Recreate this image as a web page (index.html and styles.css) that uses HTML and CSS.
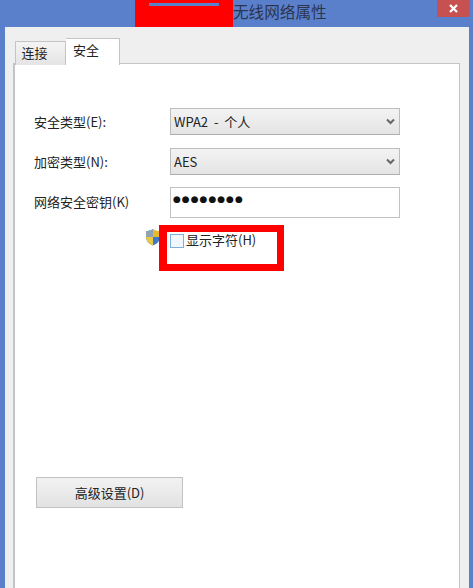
FILE: index.html
```html
<!DOCTYPE html>
<html lang="zh-CN">
<head>
    <meta charset="UTF-8">
    <title>无线网络属性</title>
    <link rel="stylesheet" href="styles.css">
</head>
<body>

    <div class="titlebar">
        <div class="redact"><div class="redact-strip"></div></div>
        <div class="title">无线网络属性</div>
        <div class="close-btn">
            <svg width="11" height="11" viewBox="0 0 11 11">
                <path d="M2 2 L9 9 M9 2 L2 9" stroke="#fff" stroke-width="2.2"/>
            </svg>
        </div>
    </div>

    <div class="dialog">
        <div class="tabs">
            <div class="tab">连接</div>
            <div class="tab active">安全</div>
        </div>

        <div class="pane">
            <div class="form">
                <label class="form-label">安全类型(E):</label>
                <div class="combo">
                    <span>WPA2 - 个人</span>
                    <svg class="chevron" width="9" height="7" viewBox="0 0 9 7">
                        <path d="M1 1.5 L4.5 5 L8 1.5" fill="none" stroke="#666" stroke-width="2"/>
                    </svg>
                </div>

                <label class="form-label">加密类型(N):</label>
                <div class="combo">
                    <span>AES</span>
                    <svg class="chevron" width="9" height="7" viewBox="0 0 9 7">
                        <path d="M1 1.5 L4.5 5 L8 1.5" fill="none" stroke="#666" stroke-width="2"/>
                    </svg>
                </div>

                <label class="form-label">网络安全密钥(K)</label>
                <div class="key-input">●●●●●●●●</div>
            </div>

            <div class="show-row">
                <svg class="shield" width="16" height="18" viewBox="0 0 16 18">
                    <path d="M8 1 C6 2.5 3.5 3 1 3 V9 C1 13 4 16 8 17.5 Z" fill="#3f78c8"/>
                    <path d="M8 1 C10 2.5 12.5 3 15 3 V9 H8 Z" fill="#e8b92e"/>
                    <path d="M8 9 V17.5 C12 16 15 13 15 9 Z" fill="#3f78c8"/>
                    <path d="M1 3 C3.5 3 6 2.5 8 1 V9 H1 Z" fill="#8fa3b5"/>
                    <path d="M8 9 H1 C1 13 4 16 8 17.5 Z" fill="#e8c845"/>
                </svg>
                <div class="show-box"></div>
                <span class="show-text">显示字符(H)</span>
                <div class="highlight"></div>
            </div>

            <button class="advanced-btn">高级设置(D)</button>
        </div>
    </div>

</body>
</html>
```

FILE: styles.css
```css
html, body {
    margin: 0;
    height: 100%;
    overflow: hidden;
}
body {
    font-family: "Noto Sans CJK SC", "Liberation Sans", sans-serif;
    font-size: 13px;
    color: #222;
    background-color: #5b80cb;
    display: flex;
    flex-direction: column;
}
.titlebar {
    height: 27px;
    flex-shrink: 0;
    display: flex;
    padding-left: 135px;
    padding-right: 3px;
}
.redact {
    width: 98px;
    background-color: #ff0000;
    padding: 3px 14px 0;
    box-sizing: border-box;
}
.redact-strip {
    height: 3px;
    background-color: #5b80cb;
}
.title {
    font-size: 15.6px;
    line-height: 23px;
    color: #2b3550;
}
.close-btn {
    width: 33px;
    height: 17px;
    margin-left: auto;
    background-color: #c75050;
    display: flex;
    align-items: center;
    justify-content: center;
}
.dialog {
    flex: 1;
    margin: 0 4px 0 5px;
    background-color: #efefef;
    padding: 11px 9px 0 8px;
    display: flex;
    flex-direction: column;
}
.tabs {
    display: flex;
    align-items: flex-end;
    padding-left: 2px;
    margin-bottom: -2px;
    position: relative;
}
.tab {
    width: 37px;
    height: 23px;
    padding-right: 12px;
    line-height: 21px;
    text-align: center;
    border: 1px solid #c4c4c4;
    border-bottom: none;
    background: linear-gradient(#f4f4f4, #e4e4e4);
}
.tab.active {
    width: 40px;
    height: 26px;
    padding-right: 13px;
    line-height: 21px;
    background: #fff;
    border-left: none;
}
.pane {
    flex: 1;
    border: 1px solid #c4c4c4;
    border-width: 1px 1px 0 2px;
    background-color: #fff;
    padding: 44px 0 0 19px;
}
.form {
    display: grid;
    grid-template-columns: 136px 230px;
    row-gap: 13px;
    align-items: start;
}
.form-label {
    white-space: nowrap;
    padding-top: 4px;
}
.combo {
    height: 27px;
    box-sizing: border-box;
    border: 1px solid #bdbdbd;
    border-bottom-color: #adadad;
    background: linear-gradient(#f3f3f3, #e4e4e4);
    padding: 0 4px 0 3px;
    word-spacing: 3px;
    display: flex;
    align-items: center;
    justify-content: space-between;
}
.key-input {
    height: 31px;
    margin-top: -1px;
    box-sizing: border-box;
    border: 1px solid #c2c2c2;
    padding-left: 2px;
    line-height: 23px;
    font-family: "DejaVu Sans", sans-serif;
    font-size: 9px;
    letter-spacing: 1px;
    color: #111;
}
.show-row {
    display: flex;
    align-items: flex-start;
    position: relative;
    margin: 11px 0 0 111px;
    height: 248px;
}
.shield {
    flex-shrink: 0;
    margin-top: -1px;
}
.show-box {
    width: 12px;
    height: 12px;
    margin: 5px 2px 0 9px;
    border: 1px solid #7fb0dc;
    background-color: #f0f7fe;
    flex-shrink: 0;
}
.show-text {
    line-height: 24px;
    margin-top: -1px;
}
/* red annotation frame drawn over the checkbox */
.highlight {
    position: absolute;
    left: 14px;
    top: -4px;
    width: 110px;
    height: 32px;
    border: 7px solid #ff0000;
    border-width: 7px 7px 7px 8px;
}
.advanced-btn {
    display: block;
    width: 147px;
    height: 31px;
    margin-left: 2px;
    border: 1px solid #c2c2c2;
    background: linear-gradient(#f2f2f2, #e2e2e2);
    font-family: inherit;
    font-size: 13px;
    color: #222;
}
```
